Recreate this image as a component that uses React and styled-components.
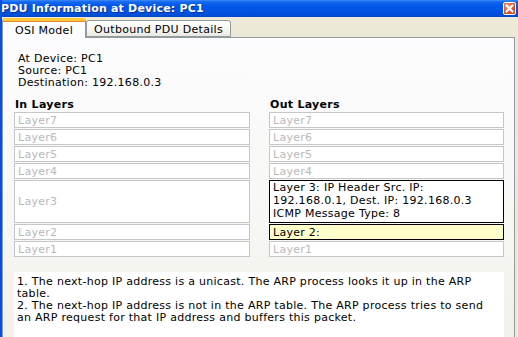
import React from "react";
import styled, { createGlobalStyle } from "styled-components";

const GlobalStyle = createGlobalStyle`
  html, body {
    margin: 0;
    padding: 0;
    background: #ece9d8;
  }
  * {
    box-sizing: border-box;
  }
`;

const inLayers = ["Layer7", "Layer6", "Layer5", "Layer4", "Layer3", "Layer2", "Layer1"];

const outLayers = [
  { label: "Layer7" },
  { label: "Layer6" },
  { label: "Layer5" },
  { label: "Layer4" },
  {
    lines: ["Layer 3: IP Header Src. IP:", "192.168.0.1, Dest. IP: 192.168.0.3", "ICMP Message Type: 8"],
    active: true,
  },
  { label: "Layer 2:", active: true, highlight: true },
  { label: "Layer1" },
];

// line breaks as the dialog wraps them
const notes = [
  "1. The next-hop IP address is a unicast. The ARP process looks it up in the ARP",
  "table.",
  "2. The next-hop IP address is not in the ARP table. The ARP process tries to send",
  "an ARP request for that IP address and buffers this packet.",
];

const App = () => {
  return (
    <Window>
      <GlobalStyle />
      <TitleBar>
        <Title>PDU Information at Device: PC1</Title>
        <CloseButton aria-label="Close">
          <svg width="9" height="9" viewBox="0 0 9 9">
            <path d="M1.5 1.5 L7.5 7.5 M7.5 1.5 L1.5 7.5" stroke="#fff" strokeWidth="2" strokeLinecap="square" />
          </svg>
        </CloseButton>
      </TitleBar>
      <Body>
        <TabStrip>
          <Tab $active>OSI Model</Tab>
          <Tab>Outbound PDU Details</Tab>
        </TabStrip>
        <TabPanel>
          <InfoBlock>
            <div>At Device: PC1</div>
            <div>Source: PC1</div>
            <div>Destination: 192.168.0.3</div>
          </InfoBlock>
          <Columns>
            <Column>
              <ColumnTitle>In Layers</ColumnTitle>
              {inLayers.map((l) => (
                <LayerBox key={l} $tall={l === "Layer3"}>
                  {l}
                </LayerBox>
              ))}
            </Column>
            <Column>
              <ColumnTitle>Out Layers</ColumnTitle>
              {outLayers.map((l, i) => (
                <LayerBox
                  key={i}
                  $tall={i === 4}
                  $active={l.active}
                  $highlight={l.highlight}
                  $top={!!l.lines}
                >
                  {l.lines ? l.lines.map((line) => <div key={line}>{line}</div>) : l.label}
                </LayerBox>
              ))}
            </Column>
          </Columns>
          <NoteBox>
            {notes.map((n) => (
              <NoteLine key={n}>{n}</NoteLine>
            ))}
          </NoteBox>
        </TabPanel>
      </Body>
    </Window>
  );
};

export default App;

const Window = styled.div`
  width: 518px;
  height: 337px;
  display: flex;
  flex-direction: column;
  overflow: hidden;
  font-family: "DejaVu Sans", Tahoma, sans-serif;
  font-size: 11px;
  letter-spacing: 0.28px;
  color: #000;
  border-left: 2px solid #0a4fd8;
  background: #ece9d8;
`;

const TitleBar = styled.div`
  height: 17px;
  flex: none;
  margin-left: -2px;
  display: flex;
  align-items: center;
  justify-content: space-between;
  padding: 0 2px 0 1px;
  background: linear-gradient(
    to bottom,
    #3a8cf8 0px,
    #1466f0 2px,
    #0058e8 6px,
    #0054e3 11px,
    #004fd6 15px,
    #0048c8 17px
  );
`;

const Title = styled.div`
  color: #fff;
  font-weight: bold;
  font-size: 11px;
  letter-spacing: 0.2px;
  text-shadow: 1px 1px 0 #0a2e9a;
  white-space: nowrap;
`;

const CloseButton = styled.div`
  width: 13px;
  height: 13px;
  border: 1px solid #fff;
  border-radius: 2px;
  background: radial-gradient(circle at 35% 30%, #f3a58a 0%, #e2582e 45%, #c8401a 100%);
  display: flex;
  align-items: center;
  justify-content: center;
`;

const Body = styled.div`
  flex: 1;
  display: flex;
  flex-direction: column;
  padding: 1px 3px 0 0;
  min-height: 0;
`;

const TabStrip = styled.div`
  display: flex;
  align-items: flex-end;
  height: 20px;
  flex: none;
  position: relative;
  z-index: 1;
  margin-bottom: -1px;
`;

const Tab = styled.div`
  width: ${(p) => (p.$active ? "84px" : "145px")};
  height: ${(p) => (p.$active ? "20px" : "17px")};
  display: flex;
  align-items: center;
  justify-content: center;
  white-space: nowrap;
  letter-spacing: 0.3px;
  border: 1px solid #919b9c;
  border-bottom: ${(p) => (p.$active ? "none" : "1px solid #919b9c")};
  border-top: ${(p) => (p.$active ? "3px solid #ffc73c" : "1px solid #919b9c")};
  border-radius: 3px 3px 0 0;
  background: ${(p) => (p.$active ? "#fcfcfe" : "linear-gradient(to bottom, #ffffff, #f3f3ef 70%, #e9e8e2)")};
  box-shadow: ${(p) => (p.$active ? "inset 0 1px 0 #e68b2c" : "none")};
  margin-bottom: ${(p) => (p.$active ? "0" : "1px")};
  padding-top: 1px;
`;

const TabPanel = styled.div`
  flex: 1;
  border: 1px solid #919b9c;
  border-bottom: none;
  background: linear-gradient(to bottom, #fcfcfe 0%, #f7f7f4 60%, #f1f0ea 100%);
  padding: 15px 10px 0 11px;
  display: flex;
  flex-direction: column;
  min-height: 0;
`;

const InfoBlock = styled.div`
  padding-left: 4px;
  line-height: 12px;
`;

const Columns = styled.div`
  display: grid;
  grid-template-columns: 236px 235px;
  column-gap: 19px;
  margin-top: 10px;
`;

const Column = styled.div`
  display: flex;
  flex-direction: column;
  gap: 1px;
`;

const ColumnTitle = styled.div`
  font-weight: bold;
  line-height: 12px;
  padding-left: 1px;
`;

const LayerBox = styled.div`
  height: ${(p) => (p.$tall ? "43px" : "16px")};
  border: 1px solid ${(p) => (p.$active ? "#000" : "#c6c6c6")};
  background: ${(p) => (p.$highlight ? "#ffffcc" : "#fff")};
  color: ${(p) => (p.$active ? "#000" : "#b9b9b9")};
  padding: 0 3px;
  display: flex;
  flex-direction: column;
  justify-content: ${(p) => (p.$top ? "flex-start" : "center")};
  line-height: 13px;
  white-space: nowrap;
  overflow: hidden;
`;

const NoteBox = styled.div`
  margin-top: 15px;
  width: 490px;
  flex: 1;
  background: #fff;
  padding: 4px 3px 0;
  line-height: 12px;
`;

const NoteLine = styled.div`
  white-space: nowrap;
`;
